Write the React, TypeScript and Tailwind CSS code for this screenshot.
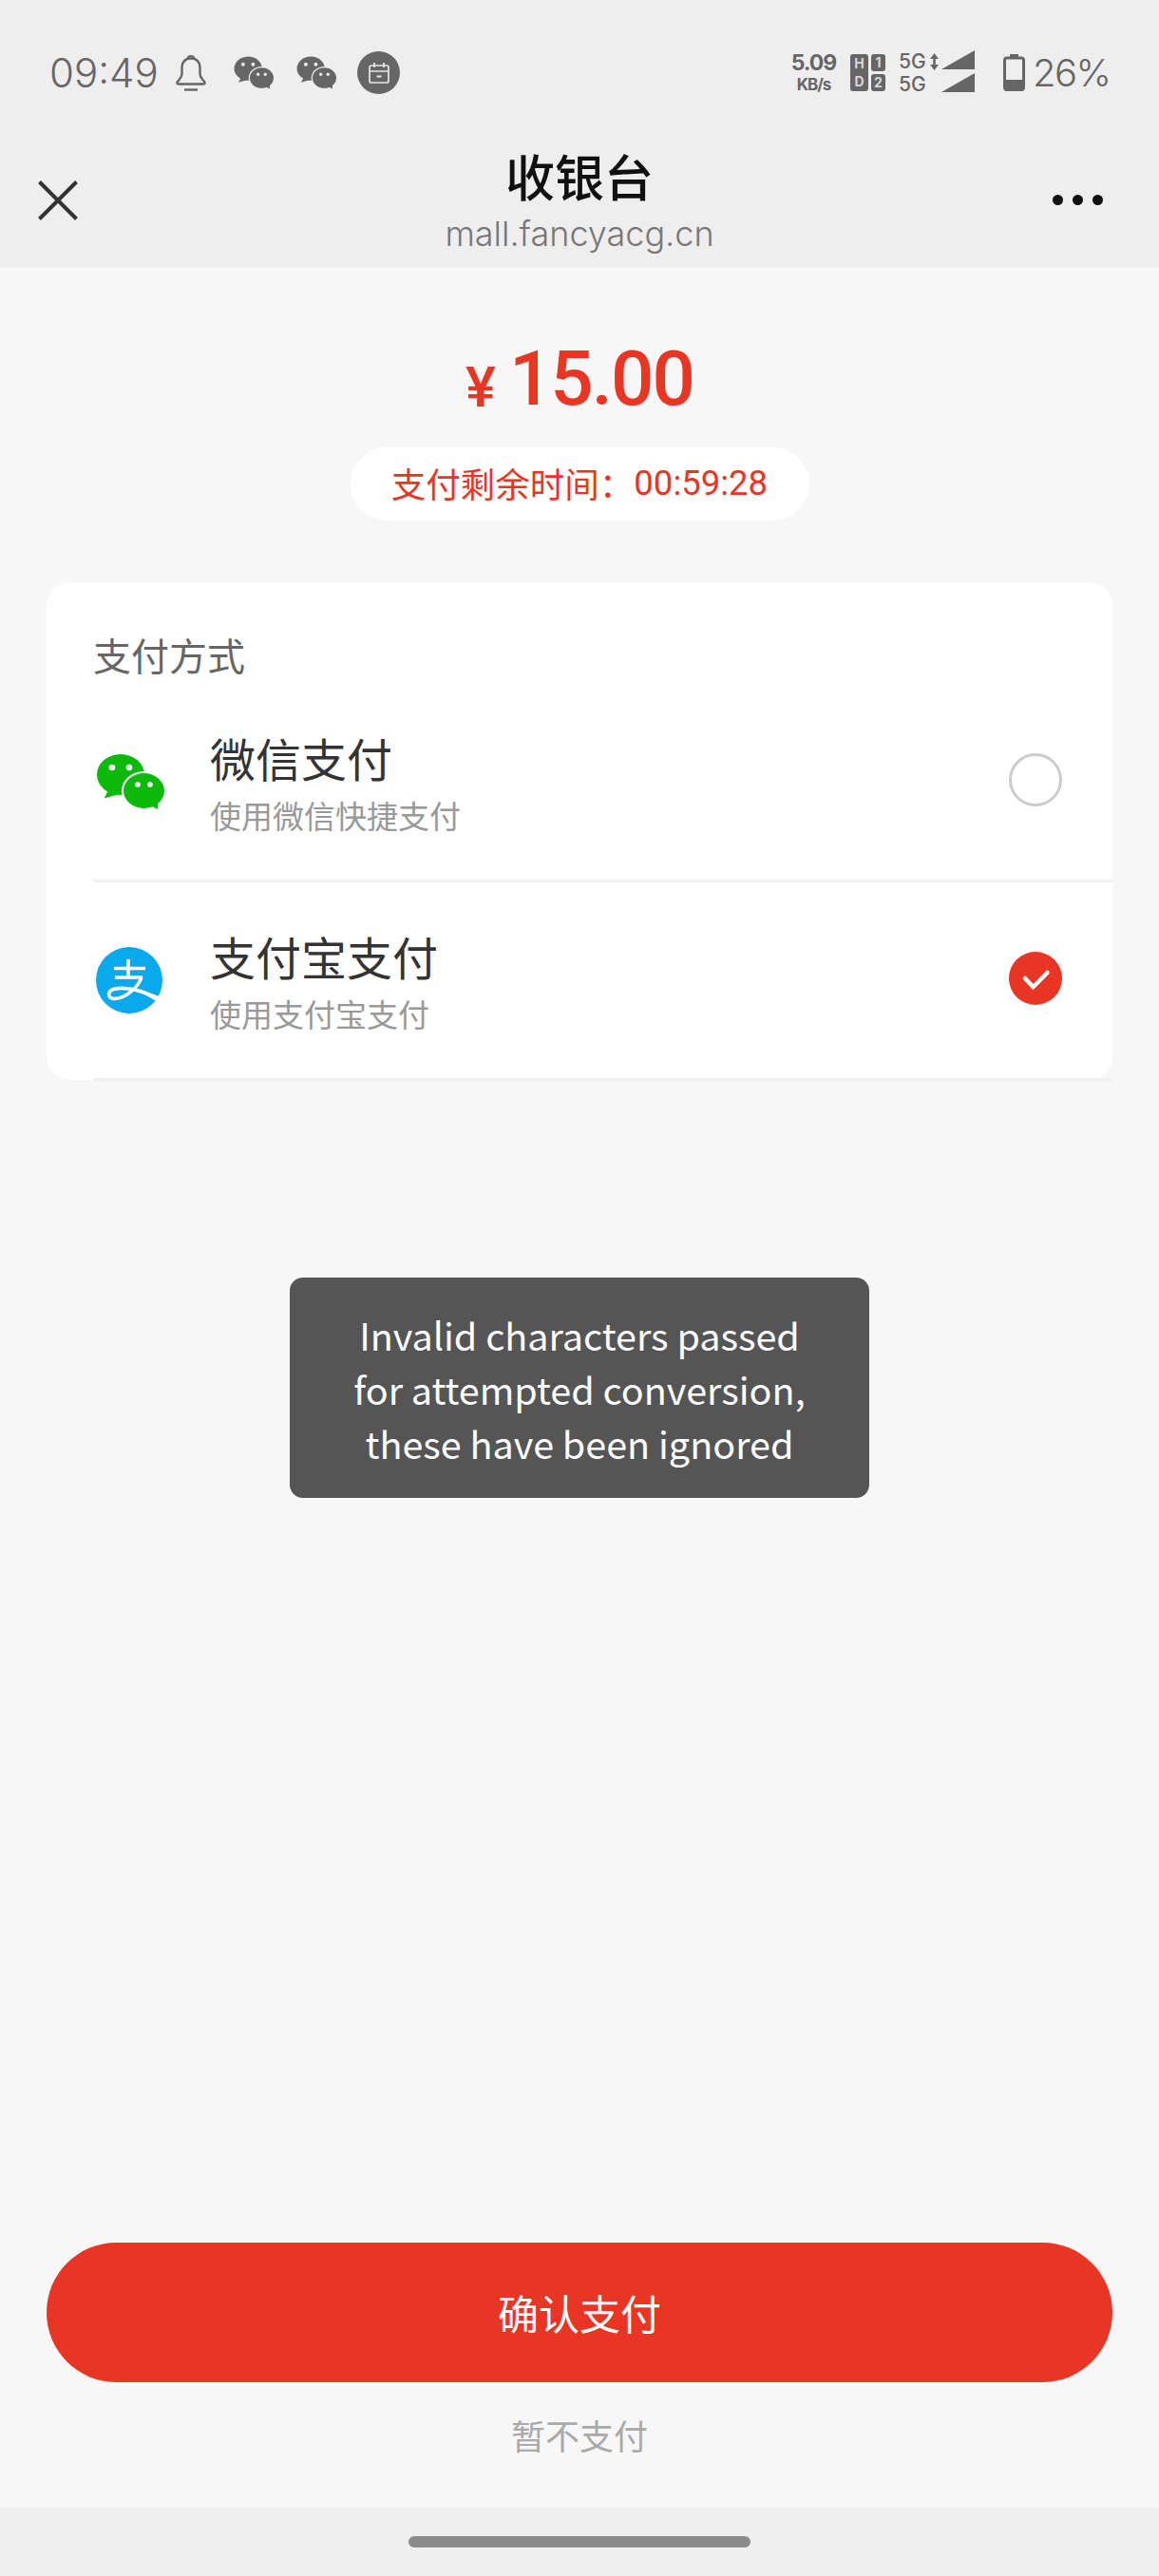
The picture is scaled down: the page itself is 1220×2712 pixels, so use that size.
const cjk = "font-['Noto_Sans_CJK_SC','Noto_Sans',sans-serif]"

function ChatBubbles({ color, halo, className }: { color: string; halo: string; className: string }) {
  return (
    <svg viewBox="0 0 72 58" className={className}>
      <ellipse cx="26" cy="21.5" rx="25" ry="21.5" fill={color} />
      <path d="M13 38 L8.5 46.5 L25 42 Z" fill={color} />
      <ellipse cx="50.5" cy="38.5" rx="23.5" ry="20.5" fill={halo} />
      <ellipse cx="50.5" cy="38.5" rx="21.5" ry="18.5" fill={color} />
      <path d="M57 54 L65 58 L65 50 Z" fill={color} />
      <circle cx="17" cy="14" r="3.3" fill={halo} />
      <circle cx="35" cy="14" r="3.3" fill={halo} />
      <circle cx="44" cy="32" r="2.8" fill={halo} />
      <circle cx="57" cy="32" r="2.8" fill={halo} />
    </svg>
  )
}

function AlipayIcon() {
  return (
    <svg viewBox="0 0 70 70" className="w-[70px] h-[70px]">
      <defs>
        <clipPath id="alipay-clip">
          <circle cx="35" cy="35" r="35" />
        </clipPath>
      </defs>
      <circle cx="35" cy="35" r="35" fill="#0aa9ec" />
      <g clipPath="url(#alipay-clip)" fill="none" stroke="#fff" strokeWidth="3.6">
        <path d="M19 22.5 H52" />
        <path d="M34 13 V32" />
        <path d="M20 32 H49" />
        <path d="M48 32 C44 43 31 54 20 54.5 C12 55 11 46 20 44 C33 41.5 52 47 72 57" />
      </g>
      <path d="M46 47 L72 53 V62 Z" fill="#fff" clipPath="url(#alipay-clip)" />
    </svg>
  )
}

function Bell() {
  return (
    <svg viewBox="0 0 32 39" className="w-[32px] h-[39px]" fill="none" stroke="#666" strokeWidth="2.4">
      <path d="M12.5 5.5 C13 1 19 1 19.5 5.5" />
      <path d="M16 4.5 C9.5 4.5 6.5 9 6.5 14 V21 C6.5 25 3.5 26.5 1.6 29.5 C1 30.5 1.6 31.5 3 31.5 H29 C30.4 31.5 31 30.5 30.4 29.5 C28.5 26.5 25.5 25 25.5 21 V14 C25.5 9 22.5 4.5 16 4.5 Z" />
      <path d="M9 37.5 H23" />
    </svg>
  )
}

function CalendarBadge() {
  return (
    <div className="w-[45px] h-[45px] rounded-full bg-[#666666] flex items-center justify-center">
      <svg viewBox="0 0 24 24" className="w-[24px] h-[24px]" fill="none" stroke="#e8e8e8" strokeWidth="1.7">
        <rect x="2" y="4" width="20" height="18" rx="2" />
        <path d="M2 10 H22 M7 1 V6 M17 1 V6" />
        <path d="M9.5 15.5 H14.5" strokeWidth="2" />
      </svg>
    </div>
  )
}

function SimBlock() {
  return (
    <div className="flex gap-[3px] font-['Inter',sans-serif] font-bold text-[#d8d8d8] text-[14px] leading-none">
      <div className="w-[19px] h-[39px] rounded-[3px] bg-[#666666] flex flex-col items-center justify-around">
        <span>H</span>
        <span>D</span>
      </div>
      <div className="flex flex-col justify-between">
        <div className="w-[15px] h-[18px] rounded-[3px] bg-[#666666] flex items-center justify-center">1</div>
        <div className="w-[15px] h-[18px] rounded-[3px] bg-[#666666] flex items-center justify-center">2</div>
      </div>
    </div>
  )
}

function Signal() {
  return (
    <div className="flex items-start font-['Inter',sans-serif] text-[21px] leading-[24px] text-[#666666] font-medium">
      <div className="flex flex-col w-[45px]">
        <div className="flex items-center gap-[4px]">
          <span className="w-[29px]">5G</span>
          <svg viewBox="0 0 9 18" className="w-[9px] h-[18px]" fill="#666">
            <path d="M4.5 0 L9 6 H0 Z M4.5 18 L0 12 H9 Z" />
            <rect x="3.2" y="5" width="2.6" height="8" />
          </svg>
        </div>
        <span>5G</span>
      </div>
      <div className="flex flex-col gap-[4px]">
        <svg viewBox="0 0 35 20" className="w-[35px] h-[20px]" fill="#666">
          <path d="M0 20 L35 0 V20 Z" />
        </svg>
        <svg viewBox="0 0 35 20" className="w-[35px] h-[20px]" fill="#666">
          <path d="M0 20 L35 0 V20 Z" />
        </svg>
      </div>
    </div>
  )
}

function Battery() {
  return (
    <svg viewBox="0 0 23 39" className="w-[23px] h-[39px]">
      <path d="M7 0 H16 V3 H7 Z" fill="#666" />
      <rect x="1.5" y="4" width="20" height="33.5" rx="2.5" fill="none" stroke="#666" strokeWidth="3" />
      <rect x="1.5" y="27" width="20" height="12" rx="2" fill="#666" />
    </svg>
  )
}

function StatusBar() {
  return (
    <div className="h-[153px] pl-[53px] pr-[53px] flex items-center justify-between text-[#666666] font-['Inter',sans-serif]">
      <div className="flex items-center">
        <span className="text-[42px] font-light leading-none w-[133px] -ml-[1px]">09:49</span>
        <Bell />
        <ChatBubbles color="#666666" halo="#eeeeee" className="w-[42px] h-[35px] ml-[29px]" />
        <ChatBubbles color="#666666" halo="#eeeeee" className="w-[42px] h-[35px] ml-[24px]" />
        <div className="ml-[22px]">
          <CalendarBadge />
        </div>
      </div>
      <div className="flex items-center">
        <div className="flex flex-col items-center w-[49px] font-bold leading-none tracking-[-1px]">
          <span className="text-[23px] leading-[24px]">5.09</span>
          <span className="text-[17px] leading-[20px] mt-[1px]">KB/s</span>
        </div>
        <div className="ml-[14px]">
          <SimBlock />
        </div>
        <div className="ml-[14px]">
          <Signal />
        </div>
        <div className="ml-[30px]">
          <Battery />
        </div>
        <span className="ml-[8px] w-[80px] text-[40px] font-light leading-none tracking-[-1.5px]">26%</span>
      </div>
    </div>
  )
}

function NavBar() {
  return (
    <div className="h-[129px] pb-[16px] px-[40px] grid grid-cols-[1fr_auto_1fr] items-center">
      <svg viewBox="0 0 42 42" className="w-[42px] h-[42px]" fill="none" stroke="#333" strokeWidth="4">
        <path d="M1.5 1.5 L40.5 40.5 M40.5 1.5 L1.5 40.5" />
      </svg>
      <div className="flex flex-col items-center mt-[2px]">
        <span className={`${cjk} text-[52px] leading-[60px] font-medium text-[#111111]`}>收银台</span>
        <span className="font-['Inter',sans-serif] text-[36px] leading-[44px] mt-[9px] font-light text-[#777777]">mall.fancyacg.cn</span>
      </div>
      <div className="flex justify-end gap-[10px] pr-[19px]">
        <div className="w-[11px] h-[11px] rounded-full bg-[#111111]" />
        <div className="w-[11px] h-[11px] rounded-full bg-[#111111]" />
        <div className="w-[11px] h-[11px] rounded-full bg-[#111111]" />
      </div>
    </div>
  )
}

function PayRow({ icon, name, desc, selected }: { icon: React.ReactNode; name: string; desc: string; selected?: boolean }) {
  return (
    <div className="-mb-[1px] ml-[49px] h-[210px] border-b-[3px] border-[#f1f1f1] pr-[53px] flex items-center">
      <div className="w-[123px] pl-[3px]">{icon}</div>
      <div className="flex-1 flex flex-col">
        <span className="text-[48px] leading-[60px] text-[#333333]">{name}</span>
        <span className="text-[33px] leading-[44px] mt-[9px] -mb-[1px] text-[#999999]">{desc}</span>
      </div>
      {selected ? (
        <div className="mb-[3px] w-[56px] h-[56px] rounded-full bg-[#e93524] flex items-center justify-center">
          <svg viewBox="0 0 56 56" className="w-[56px] h-[56px]" fill="none" stroke="#fff" strokeWidth="4.5" strokeLinecap="round">
            <path d="M17 28 L25.5 37 L40.5 22" />
          </svg>
        </div>
      ) : (
        <div className="mb-[3px] w-[56px] h-[56px] rounded-full border-[3px] border-[#cccccc]" />
      )}
    </div>
  )
}

export default function App() {
  return (
    <div className={`${cjk} relative w-[1220px] h-[2712px] bg-[#f7f7f7] flex flex-col overflow-hidden`}>
      <div className="bg-[#eeeeee]">
        <StatusBar />
        <NavBar />
      </div>

      <div className="flex-1 flex flex-col">
        <div className="pt-[67px] flex flex-col items-center text-[#e93524]">
          <div className="h-[100px] flex items-center font-['Roboto',sans-serif] font-medium">
            <span className="text-[60px] leading-none mt-[17px] mr-[14px]">¥</span>
            <span className="text-[80px] leading-none tracking-[-2px]">15.00</span>
          </div>
          <div className="mt-[22px] h-[77px] w-[483px] rounded-full bg-white flex items-center justify-center text-[36.5px]">
            <span>支付剩余时间：</span>
            <span className="font-['Roboto',sans-serif]">00:59:28</span>
          </div>
        </div>

        <div className="mt-[65px] mx-[49px] rounded-[24px] bg-white">
          <div className="pl-[49px] pt-[56px] h-[106px] text-[40px] leading-[40px] text-[#666666]">支付方式</div>
          <PayRow
            icon={<ChatBubbles color="#0cb90c" halo="#ffffff" className="w-[72px] h-[58px]" />}
            name="微信支付"
            desc="使用微信快捷支付"
          />
          <PayRow icon={<AlipayIcon />} name="支付宝支付" desc="使用支付宝支付" selected />
        </div>

        <div className="mt-auto mx-[49px] h-[147px] rounded-full bg-[#e93524] flex items-center justify-center text-[43px] text-white">
          确认支付
        </div>
        <div className="mt-[29px] mb-[51px] h-[52px] leading-[52px] text-center text-[36px] text-[#aaaaaa]">暂不支付</div>
      </div>

      <div className="h-[72px] bg-[#efefef] flex justify-center pt-[30px]">
        <div className="w-[360px] h-[12px] rounded-full bg-[#8c8c8c]" />
      </div>

      <div className="absolute left-[305px] top-[1345px] w-[610px] h-[232px] rounded-[14px] bg-[#555555] flex items-center justify-center text-center text-[39.5px] leading-[57px] text-white">
        <p>
          Invalid characters passed
          <br />
          for attempted conversion,
          <br />
          these have been ignored
        </p>
      </div>
    </div>
  )
}
